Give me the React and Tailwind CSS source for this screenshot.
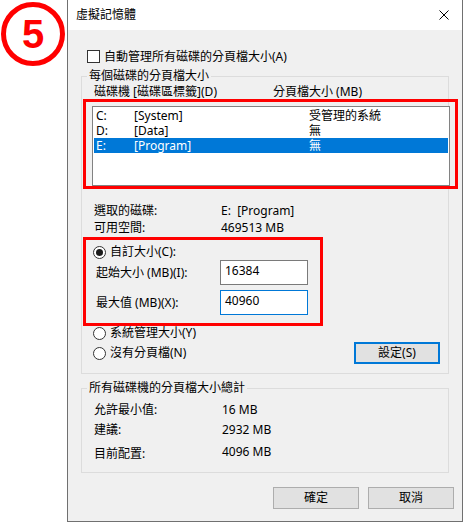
import React from 'react';

const ROWS = [
  { drive: 'C:', label: '[System]', size: '受管理的系統' },
  { drive: 'D:', label: '[Data]', size: '無' },
  { drive: 'E:', label: '[Program]', size: '無', selected: true },
];

function Radio({ checked }) {
  return (
    <span className="w-[13px] h-[13px] rounded-full border border-[#333333] bg-white flex items-center justify-center shrink-0">
      {checked && <span className="w-[7px] h-[7px] rounded-full bg-[#1a1a1a]" />}
    </span>
  );
}

function Button({ children, focused }) {
  return (
    <div
      className={`w-[86px] h-[22px] flex items-center justify-center bg-[#e1e1e1] ${
        focused ? 'border-2 border-[#0078d7]' : 'border border-[#adadad]'
      }`}
    >
      {children}
    </div>
  );
}

export default function App() {
  return (
    <div className="w-[463px] h-[523px] bg-white flex text-[12px] leading-[16px] text-black font-['Noto_Sans','Noto_Sans_CJK_TC',sans-serif]">
      {/* Step badge */}
      <div className="w-[67px] pl-[1px] pt-[2px]">
        <div className="w-[64px] h-[64px] rounded-full border-[5px] border-[#ff0000] flex items-center justify-center">
          <span className="text-[40px] leading-none font-bold text-[#ff0000] font-['Liberation_Sans',sans-serif]">5</span>
        </div>
      </div>

      {/* Dialog */}
      <div className="w-[396px] h-[522px] border-x border-b border-[#707070] flex flex-col">
        <div className="h-[30px] bg-white flex items-center justify-between pl-[8px] pr-[13px]">
          <span>虛擬記憶體</span>
          <svg width="10" height="10" viewBox="0 0 10 10">
            <path d="M0.5 0.5 L9.5 9.5 M9.5 0.5 L0.5 9.5" stroke="#000" strokeWidth="1" />
          </svg>
        </div>

        <div className="flex-1 bg-[#f0f0f0] pt-[20px] px-[13px] flex flex-col">
          <div className="flex items-center gap-[4px] pl-[6px] h-[13px]">
            <span className="w-[13px] h-[13px] border border-[#333333] bg-white shrink-0" />
            <span>自動管理所有磁碟的分頁檔大小(A)</span>
          </div>

          {/* Per-drive group */}
          <div className="relative mt-[13px] h-[298px] border border-[#dcdcdc] flex flex-col">
            <span className="absolute left-[5px] top-[-9px] px-[2px] bg-[#f0f0f0]">每個磁碟的分頁檔大小</span>

            <div className="mt-[7px] h-[16px] pl-[12px] flex">
              <span className="w-[179px]">磁碟機 [磁碟區標籤](D)</span>
              <span>分頁檔大小 (MB)</span>
            </div>

            <div className="mt-[6px] ml-[10px] w-[358px] h-[80px] border border-[#828282] bg-white p-[1px]">
              {ROWS.map((r) => (
                <div
                  key={r.drive}
                  className={`h-[15px] leading-[15px] flex items-center pl-[2px] ${r.selected ? 'bg-[#0078d7] text-white' : ''}`}
                >
                  <span className="w-[38px]">{r.drive}</span>
                  <span className="w-[175px]">{r.label}</span>
                  <span>{r.size}</span>
                </div>
              ))}
            </div>

            <div className="mt-[16px] pl-[12px] grid grid-cols-[127px_auto] leading-[17px]">
              <span>選取的磁碟:</span>
              <span>E:&nbsp; [Program]</span>
              <span>可用空間:</span>
              <span>469513 MB</span>
            </div>

            <div className="mt-[8px] h-[16px] pl-[11px] flex items-center gap-[4px]">
              <Radio checked />
              <span>自訂大小(C):</span>
            </div>

            <div className="h-[25px] pl-[14px] flex items-center">
              <span className="w-[124px]">起始大小 (MB)(I):</span>
              <div className="w-[88px] h-[25px] border border-[#7a7a7a] bg-white pl-[4px] pt-[2px]">16384</div>
            </div>

            <div className="mt-[5px] h-[25px] pl-[14px] flex items-center">
              <span className="w-[124px]">最大值 (MB)(X):</span>
              <div className="w-[88px] h-[25px] border border-[#0078d7] bg-white pl-[4px] pt-[2px]">40960</div>
            </div>

            <div className="mt-[10px] h-[16px] pl-[11px] flex items-center gap-[4px]">
              <Radio />
              <span>系統管理大小(Y)</span>
            </div>

            <div className="mt-[1px] h-[22px] pl-[11px] pr-[8px] flex items-center">
              <Radio />
              <span className="ml-[4px]">沒有分頁檔(N)</span>
              <div className="ml-auto">
                <Button focused>設定(S)</Button>
              </div>
            </div>

            {/* Annotation boxes */}
            <div className="absolute left-[1px] top-[22px] w-[375px] h-[90px] border-[3px] border-[#ff0000]" />
            <div className="absolute left-[1px] top-[160px] w-[240px] h-[89px] border-[3px] border-[#ff0000]" />
          </div>

          {/* Totals group */}
          <div className="relative mt-[14px] h-[85px] border border-[#dcdcdc] pl-[12px]">
            <span className="absolute left-[5px] top-[-9px] px-[2px] bg-[#f0f0f0]">所有磁碟機的分頁檔大小總計</span>
            <div className="mt-[13px] grid grid-cols-[128px_auto]">
              <span>允許最小值:</span>
              <span>16 MB</span>
            </div>
            <div className="mt-[4px] grid grid-cols-[128px_auto]">
              <span>建議:</span>
              <span>2932 MB</span>
            </div>
            <div className="mt-[6px] grid grid-cols-[128px_auto]">
              <span className="pt-[2px]">目前配置:</span>
              <span>4096 MB</span>
            </div>
          </div>

          <div className="mt-[14px] mr-[-5px] flex justify-end gap-[9px]">
            <Button>確定</Button>
            <Button>取消</Button>
          </div>
        </div>
      </div>
    </div>
  );
}
